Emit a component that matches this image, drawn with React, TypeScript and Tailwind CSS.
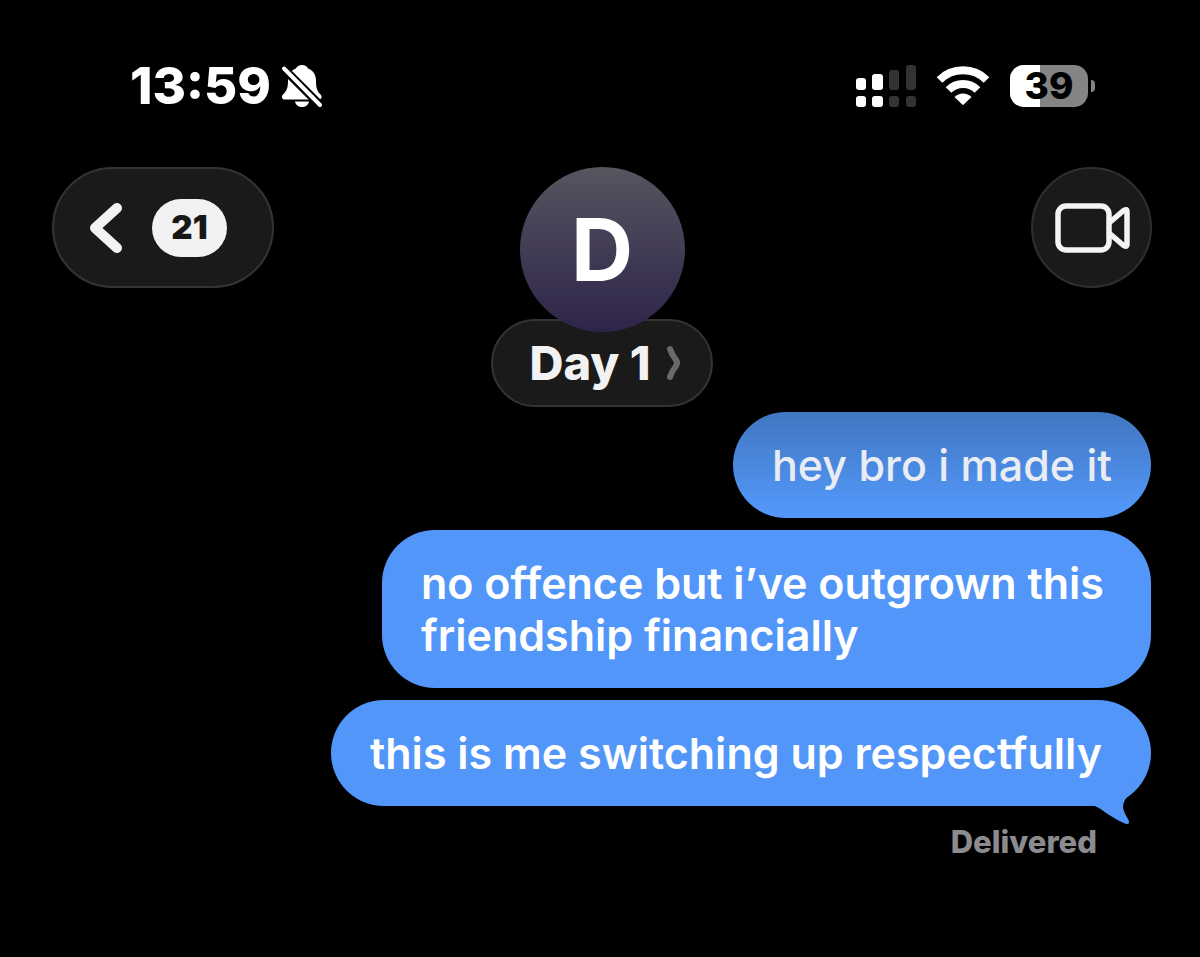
type BubbleProps = { text: string; tone?: "faded" | "plain"; wrap?: boolean; tail?: boolean };

function MutedBell() {
  return (
    <svg viewBox="0 0 44 46" className="h-[46px] w-11" fill="#fff" aria-label="Silent mode">
      <path d="M23 2c-3 0-5.200 1.400-6 3.500C11.500 7.500 9 12 9 18c0 7-1.500 10-5 13.500-2 2.300-1.200 5 2 5h33.500c3.300 0 4-2.800 2-5C38 28 37 25 37 18c0-6-2.500-10.500-8-12.500C28.200 3.400 26 2 23 2Z" />
      <path d="M16 38.500h14c-.5 3.500-3.500 5.500-7 5.500s-6.500-2-7-5.500Z" />
      <path d="M4.500 5.500 41 42" stroke="#000" strokeWidth="8.500" />
      <path d="M5 5.500 41 42" stroke="#fff" strokeWidth="4" strokeLinecap="round" />
    </svg>
  );
}

function Signal() {
  return (
    <svg viewBox="0 0 60 42" className="h-[42px] w-[60px]" aria-label="Signal strength">
      <g fill="#fff">
        <rect y="13" width="10" height="12" rx="3" />
        <rect x="16" y="9" width="11" height="16" rx="3" />
        <rect y="31" width="10" height="11" rx="3" />
        <rect x="16" y="31" width="11" height="11" rx="3" />
      </g>
      <g fill="#333">
        <rect x="33" y="5" width="10" height="20" rx="3" />
        <rect x="50" y="0" width="10" height="25" rx="3" />
        <rect x="33" y="31" width="10" height="11" rx="3" />
        <rect x="50" y="31" width="10" height="11" rx="3" />
      </g>
    </svg>
  );
}

function Wifi() {
  return (
    <svg viewBox="0 0 54 40" className="h-10 w-[54px]" aria-label="Wi-Fi">
      <g fill="none" stroke="#fff" strokeWidth="8">
        <path d="M3.500 14a33.500 33.500 0 0 1 47 0" />
        <path d="M12.500 24a20.500 20.500 0 0 1 29 0" />
      </g>
      <path d="M18.500 31a12 12 0 0 1 17 0l-7.700 7.500q-.8.700-1.600 0Z" fill="#fff" />
    </svg>
  );
}

function Battery({ level }: { level: number }) {
  return (
    <div className="flex items-center gap-[3px]">
      <div className="relative flex h-[42px] w-[78px] items-center justify-center overflow-hidden rounded-[14px] bg-[#848484]">
        <div className="absolute inset-y-0 left-0 bg-white" style={{ width: `${level}%` }} />
        <span className="relative text-[37px] leading-none font-extrabold text-black">{level}</span>
      </div>
      <div className="h-3 w-1 rounded-r-full bg-[#848484]" />
    </div>
  );
}

function Bubble({ text, tone = "plain", wrap = false, tail = false }: BubbleProps) {
  return (
    <li
      className={`relative rounded-[53px] py-[27px] pl-[39px] text-[43px] leading-[52px] ${
        wrap ? "max-w-[769px]" : "max-w-full"
      } ${tail ? "pr-[49px]" : "pr-[39px]"} ${
        tone === "faded"
          ? "bg-linear-to-b from-[#4176c0] to-[#5297f8] to-90% font-medium text-[#e9edf3]"
          : "bg-[#5196f8] font-semibold text-white"
      }`}
    >
      {tail && (
        <svg viewBox="0 0 60 50" className="absolute right-0 -bottom-5 h-[50px] w-[60px]" fill="#5196f8" aria-hidden="true">
          <path d="M0 30H4C11 33 22 43 34 47.500C37 49 39 47.500 37.500 44C34 38 31 33 32.500 28C33.500 23 37 20 41 17L44 0H0Z" />
        </svg>
      )}
      <span className="relative">{text}</span>
    </li>
  );
}

export default function App() {
  return (
    <div className="min-h-screen bg-black font-['Inter','Liberation_Sans',sans-serif] text-white">
      <div className="flex h-[167px] items-start justify-between pt-[63px] pr-[105px] pl-[130px]">
        <div className="flex items-center gap-2">
          <time className="text-[51px] leading-[46px] font-extrabold">13:59</time>
          <MutedBell />
        </div>
        <div className="flex h-[45px] items-center gap-5">
          <Signal />
          <Wifi />
          <Battery level={39} />
        </div>
      </div>

      <header className="grid h-[245px] grid-cols-[1fr_auto_1fr] items-start pr-12 pl-[52px]">
        <button
          type="button"
          aria-label="Back, 21 unread"
          className="flex h-[121px] w-[222px] items-center gap-[29px] rounded-full border-2 border-[#343434] bg-[#1a1a1a] pl-[35px]"
        >
          <svg viewBox="0 0 34 52" className="h-[52px] w-[34px]" fill="none" stroke="#f2f2f3" strokeWidth="10" strokeLinecap="round" strokeLinejoin="round" aria-hidden="true">
            <path d="M28 6 6 26l22 20" />
          </svg>
          <span className="flex h-[58px] w-[75px] items-center justify-center rounded-full bg-[#f2f2f4] text-[33px] font-black text-[#171717]">
            21
          </span>
        </button>

        <button type="button" className="flex flex-col items-center">
          <span className="z-10 flex size-[165px] items-center justify-center rounded-full bg-linear-to-b from-[#58545f] to-[#2e2449] text-[86px] leading-none font-bold">
            D
          </span>
          <span className="-mt-[13px] flex h-[88px] w-[222px] items-center justify-center gap-4 rounded-full border-2 border-[#343434] bg-[#1a1a1a] pl-2 text-[47px] font-extrabold text-[#f2f2f2]">
            Day 1
            <svg viewBox="0 0 16 36" className="h-9 w-4" fill="none" stroke="#6a6a6a" strokeWidth="6" strokeLinecap="round" strokeLinejoin="round" aria-hidden="true">
              <path d="M4 4q2 6 6 11 2 3 0 6-4 5-6 11" />
            </svg>
          </span>
        </button>

        <button
          type="button"
          aria-label="Video call"
          className="flex size-[121px] items-center justify-center justify-self-end rounded-full border-2 border-[#2f2f2f] bg-[#1a1a1a]"
        >
          <svg viewBox="0 0 76 50" className="h-[50px] w-[76px]" fill="none" stroke="#f4f4f4" strokeWidth="5.500" strokeLinejoin="round" aria-hidden="true">
            <rect x="4" y="3" width="51" height="44" rx="8" />
            <path d="M55 20 69 8q4-3 4 1v32q0 4-4 1L55 30" />
          </svg>
        </button>
      </header>

      <main className="flex flex-col items-end pr-[49px] pl-6">
        <ul className="flex flex-col items-end gap-3">
          <Bubble text="hey bro i made it" tone="faded" />
          <Bubble text="no offence but i’ve outgrown this friendship financially" wrap />
          <Bubble text="this is me switching up respectfully" tail />
        </ul>
        <p className="mt-5 mr-[54px] text-[31px] leading-8 font-extrabold text-[#8b8b90]">Delivered</p>
      </main>
    </div>
  );
}
